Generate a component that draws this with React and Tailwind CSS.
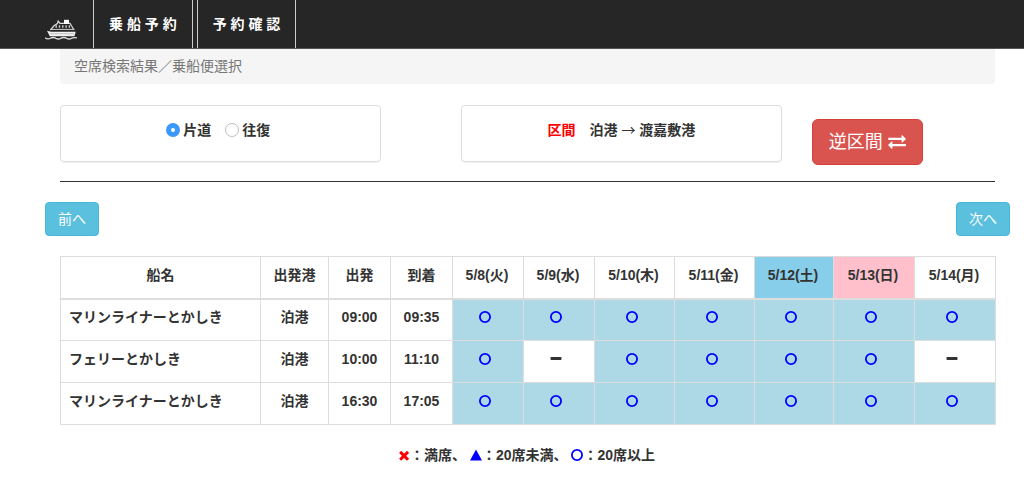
import React, { useState } from "react";

const days = [
  { label: "5/8(火)", width: "w-[71px]" },
  { label: "5/9(水)", width: "w-[71px]" },
  { label: "5/10(木)", width: "w-[80px]" },
  { label: "5/11(金)", width: "w-[80px]" },
  { label: "5/12(土)", width: "w-[79px]", tone: "bg-[#87ceeb]" },
  { label: "5/13(日)", width: "w-[81px]", tone: "bg-[#ffc0cb]" },
  { label: "5/14(月)", width: "w-[81px]" },
];

const sailings = [
  { ship: "マリンライナーとかしき", port: "泊港", dep: "09:00", arr: "09:35", seats: [1, 1, 1, 1, 1, 1, 1] },
  { ship: "フェリーとかしき", port: "泊港", dep: "10:00", arr: "11:10", seats: [1, 0, 1, 1, 1, 1, 0] },
  { ship: "マリンライナーとかしき", port: "泊港", dep: "16:30", arr: "17:05", seats: [1, 1, 1, 1, 1, 1, 1] },
];

function Circle() {
  return (
    <svg viewBox="0 0 12 12" className="inline-block size-3 align-[-1px]" role="img" aria-label="20席以上">
      <circle cx="6" cy="6" r="5.1" fill="none" stroke="#0000ff" strokeWidth="1.8" />
    </svg>
  );
}

function Dash() {
  return (
    <svg viewBox="0 0 12 12" className="inline-block size-3 align-[-1px]" role="img" aria-label="運航なし">
      <rect x="0.5" y="4" width="11" height="3" rx="0.8" fill="#333333" />
    </svg>
  );
}

function Cross() {
  return (
    <svg viewBox="0 0 12 12" className="inline-block size-3 align-[-2px]" aria-hidden="true">
      <path d="M3.2 2.9 9 8.7M9 2.9 3.2 8.7" stroke="#ff0000" strokeWidth="3" strokeLinecap="square" fill="none" />
    </svg>
  );
}

function Triangle() {
  return (
    <svg viewBox="0 0 12 12" className="inline-block size-3 align-[-1px]" aria-hidden="true">
      <path d="M6 .5 12 11.5H0Z" fill="#0000ff" />
    </svg>
  );
}

function Exchange() {
  return (
    <svg viewBox="0 0 18 14" className="h-[14px] w-[18px]" fill="currentColor" aria-hidden="true">
      <path d="M.3 2.7H13.6V.2H14.3L18 3.9 14.3 7.5H13.6V5.1H.3ZM17.9 8.9H4.4V6.5H3.7L0 10.1 3.7 13.8H4.4V11.3H17.9Z" />
    </svg>
  );
}

function Ship() {
  return (
    <svg viewBox="0 0 32 22" className="h-[22px] w-8" fill="none" aria-hidden="true">
      <path d="M5.5 11 9 6.8 12.4 4.6 13.2 2 15 4.3H25L29 11" stroke="#dddddd" strokeWidth="1.2" />
      <path d="M19 .8H24V5H19Z" fill="#ffffff" />
      <path d="M10.5 7.5H26" stroke="#cccccc" strokeWidth="2.4" strokeDasharray="1.4 1.9" />
      <path d="M5 10.4H29.3" stroke="#cccccc" strokeWidth="1" />
      <path d="M2 11.8 6 12.7H30.7L29.4 17.3H4.8Z" fill="#f1f1f1" />
      <path d="M5 14.7H29" stroke="#aaaaaa" strokeWidth=".7" />
      <path d="M0 18.7Q2.7 20.8 5.4 19.2 8 17.8 10.7 19.2 13.4 20.8 16 19.2 18.7 17.8 21.4 19.2 24 20.8 26.7 19.2 29.3 18 32 19" stroke="#dddddd" strokeWidth="1.3" />
    </svg>
  );
}

const navLink = "flex h-12 items-center border-x border-[#cccccc] px-[15px] pb-px font-bold text-white";
const card = "flex h-[57px] w-[34.3%] justify-center rounded border border-[#dddddd] pt-[14px] font-bold shadow-[0_1px_1px_rgba(0,0,0,0.05)]";
const pager = "h-[34px] rounded border border-[#46b8da] bg-[#5bc0de] px-3 text-white";
const radio = "size-[14px] appearance-none rounded-full border border-[#bdbdbd] bg-white checked:border-[5px] checked:border-[#3b99fc]";

export default function App() {
  const [trip, setTrip] = useState("oneway");
  return (
    <div className="bg-white pb-5 font-['Liberation_Sans','Noto_Sans_CJK_JP',sans-serif] text-sm leading-5 text-[#333333]">
      <header className="border-b border-[#555555] bg-[#262626]">
        <nav className="flex h-12 gap-1 pl-[45px]" aria-label="メイン">
          <a href="#top" className="mr-3 flex items-end pb-[7px]" aria-label="ホーム">
            <Ship />
          </a>
          <a href="#reserve" className={navLink}>乗 船 予 約</a>
          <a href="#confirm" className={navLink}>予 約 確 認</a>
        </nav>
      </header>

      <main className="pr-[29px] pl-[60px]">
        <h1 className="rounded-b bg-[#f5f5f5] px-[14px] pt-[7px] pb-2 text-[#777777]">空席検索結果／乗船便選択</h1>

        <section className="mt-[21px] flex items-start border-b border-[#333333] pb-4">
          <div className={card}>
            <div className="flex h-5 gap-[14px] pr-1">
              <label className="flex items-center gap-[3px]">
                <input type="radio" name="trip" className={radio} checked={trip === "oneway"} onChange={() => setTrip("oneway")} />
                片道
              </label>
              <label className="flex items-center gap-[3px]">
                <input type="radio" name="trip" className={radio} checked={trip === "round"} onChange={() => setTrip("round")} />
                往復
              </label>
            </div>
          </div>
          <div className={card + " ml-[8.6%]"}>
            <p><span className="text-[#ff0000]">区間</span>　泊港 <span className="font-['Noto_Sans_CJK_JP',sans-serif] leading-none font-normal">→</span> 渡嘉敷港</p>
          </div>
          <button type="button" className="mt-[14px] ml-[30px] flex h-[46px] items-center gap-[5px] rounded-md border border-[#d43f3a] bg-[#d9534f] px-4 text-lg text-white">
            逆区間 <Exchange />
          </button>
        </section>

        <div className="mt-5 -mr-[15px] -ml-[15px] flex justify-between">
          <button type="button" className={pager}>前へ</button>
          <button type="button" className={pager}>次へ</button>
        </div>

        <table className="mt-5 w-full table-fixed border-collapse text-center font-bold [&_td]:border [&_td]:border-[#dddddd] [&_th]:border [&_th]:border-[#dddddd]">
          <thead>
            <tr className="h-[42px] border-b-2 border-[#dddddd] [&>th]:border-b-2 [&>th]:pb-1">
              <th className="w-[200px]">船名</th>
              <th className="w-[68px]">出発港</th>
              <th className="w-[62px]">出発</th>
              <th className="w-[62px]">到着</th>
              {days.map((d) => (
                <th key={d.label} className={d.width + " pr-[2px] " + (d.tone || "")}>{d.label}</th>
              ))}
            </tr>
          </thead>
          <tbody>
            {sailings.map((s) => (
              <tr key={s.dep} className="h-[42px] [&>td]:pb-[5px]">
                <td className="px-2 text-left">{s.ship}</td>
                <td>{s.port}</td>
                <td>{s.dep}</td>
                <td>{s.arr}</td>
                {s.seats.map((open, i) => (
                  <td key={days[i].label} className={open ? "bg-[#add8e6] pr-[6px]" : "bg-white pr-[6px]"}>
                    {open ? <Circle /> : <Dash />}
                  </td>
                ))}
              </tr>
            ))}
          </tbody>
        </table>

        <p className="mt-5 pr-[2px] text-center font-bold">
          <Cross />：満席、 <Triangle />：20席未満、 <Circle />：20席以上
        </p>
      </main>
    </div>
  );
}
